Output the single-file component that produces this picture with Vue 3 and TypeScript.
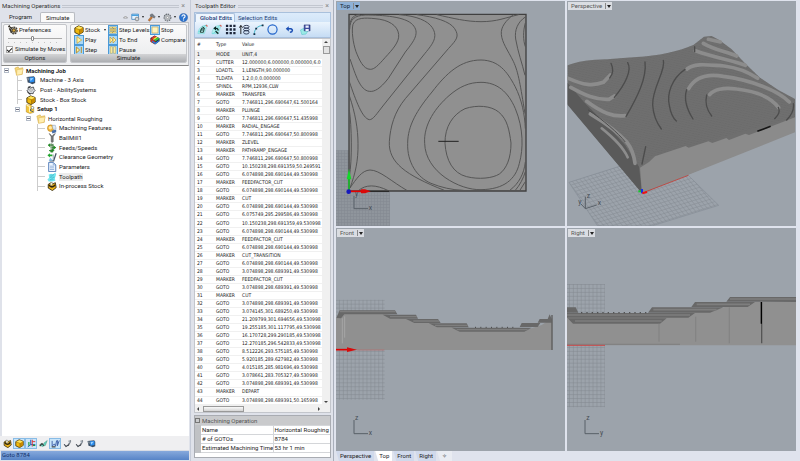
<script setup lang="ts">
import { ref } from 'vue'

interface TreeNode {
  label: string
  icon: string
  depth: number
  open?: boolean
  strong?: boolean
  selected?: boolean
}

const tree: TreeNode[] = [
  { label: 'Machining Job', icon: 'folder', depth: 0, open: true, strong: true },
  { label: 'Machine - 3 Axis', icon: 'machine', depth: 1 },
  { label: 'Post - AbilitySystems', icon: 'post', depth: 1 },
  { label: 'Stock - Box Stock', icon: 'box', depth: 1 },
  { label: 'Setup 1', icon: 'setup', depth: 1, open: true, strong: true },
  { label: 'Horizontal Roughing', icon: 'folder', depth: 2, open: true },
  { label: 'Machining Features', icon: 'features', depth: 3 },
  { label: 'BallMill1', icon: 'mill', depth: 3 },
  { label: 'Feeds/Speeds', icon: 'feeds', depth: 3 },
  { label: 'Clearance Geometry', icon: 'clearance', depth: 3 },
  { label: 'Parameters', icon: 'page', depth: 3 },
  { label: 'Toolpath', icon: 'path', depth: 3, selected: true },
  { label: 'In-process Stock', icon: 'instock', depth: 3 },
]

const source = `MODE UNIT,4
CUTTER 12.000000,6.000000,0.000000,6.0
LOADTL 1,LENGTH,90.000000
TLDATA 1,2,0,0,0.000000
SPINDL RPM,12936,CLW
MARKER TRANSFER
GOTO 7.746811,296.690647,61.500164
MARKER PLUNGE
GOTO 7.746811,296.690647,51.435998
MARKER RADIAL_ENGAGE
GOTO 7.746811,296.690647,50.800998
MARKER ZLEVEL
MARKER PATHRAMP_ENGAGE
GOTO 7.746811,296.690647,50.800998
GOTO 10.150238,298.691359,50.249591
GOTO 6.074898,298.690144,49.530998
MARKER FEEDFACTOR_CUT
GOTO 6.074898,298.690144,49.530998
MARKER CUT
GOTO 6.074898,298.690144,49.530998
GOTO 6.075749,295.299586,49.530998
GOTO 10.150238,298.691359,49.530998
GOTO 6.074898,298.690144,49.530998
MARKER FEEDFACTOR_CUT
GOTO 6.074898,298.690144,49.530998
MARKER CUT_TRANSITION
GOTO 6.074898,298.690144,49.530998
GOTO 3.074898,298.689391,49.530998
MARKER FEEDFACTOR_CUT
GOTO 3.074898,298.689391,49.530998
MARKER CUT
GOTO 3.074898,298.689391,49.530998
GOTO 3.074145,301.689250,49.530998
GOTO 21.209799,301.694656,49.530998
GOTO 19.255185,301.117795,49.530998
GOTO 16.170728,299.290185,49.530998
GOTO 12.270185,296.542833,49.530998
GOTO 8.512226,293.575185,49.530998
GOTO 5.920185,289.627982,49.530998
GOTO 4.015185,285.981696,49.530998
GOTO 3.078661,283.705327,49.530998
GOTO 3.074898,298.689391,49.530998
MARKER DEPART
GOTO 3.074898,298.689391,50.165998`

const commands = source.split('\n').map((line) => {
  const cut = line.indexOf(' ')
  return { type: line.slice(0, cut), value: line.slice(cut + 1) }
})

const simulateColumns = [
  [
    { label: 'Stock', icon: 'box', menu: true },
    { label: 'Play', icon: 'play' },
    { label: 'Step', icon: 'step' },
  ],
  [
    { label: 'Step Levels', icon: 'levels' },
    { label: 'To End', icon: 'toend' },
    { label: 'Pause', icon: 'pause' },
  ],
  [
    { label: 'Stop', icon: 'stop' },
    { label: 'Compare', icon: 'compare' },
  ],
]

const editTools = ['regen', 'swap', 'dots', 'levelsort', 'arc', 'circle', 'undo', 'save']
const viewTools = [
  { icon: 'instock', on: false },
  { icon: 'box', on: true },
  { icon: 'axes', on: true },
  { icon: 'toolpath2', on: false },
  { icon: 'toolw', on: true },
  { icon: 'tool', on: false },
  { icon: 'tool', on: false },
  { icon: 'machine', on: false },
]

const details = [
  ['Name', 'Horizontal Roughing'],
  ['# of GOTOs', '8784'],
  ['Estimated Machining Time', '53 hr 1 min'],
]

const viewTabs = ['Perspective', 'Top', 'Front', 'Right']
const activeView = ref('Top')
const byMoves = ref(true)
const speed = ref(45)
</script>

<template>
  <svg class="defs" aria-hidden="true">
    <symbol id="folder" viewBox="0 0 24 24">
      <path d="M2 5l8-3 2 4 9-2-1 16-14 2z" fill="#f5d777" stroke="#c79a32" />
      <path d="M7 9l15-2-3 13-13 2z" fill="#ffeeb0" stroke="#d9ae4c" />
    </symbol>
    <symbol id="machine" viewBox="0 0 24 24">
      <path d="M2 5l17-2 3 4v12l-7 3-6-3-5-1z" fill="#3b4f66" />
      <path d="M8 6l12-1v11l-11 2z" fill="#2a8df0" />
      <path d="M1 5l7 2-1 6-5-3z" fill="#7b8793" />
      <path d="M10 8l8-1-7 8z" fill="#9bd2ff" />
    </symbol>
    <symbol id="post" viewBox="0 0 24 24">
      <path d="M5 6l5-3 3 3 5-1 1 5 3 3-4 4-1 4-5-1-4 2-2-5-4-3 3-3z" fill="#d9dde2" stroke="#3c4046" stroke-width="2" />
      <circle cx="12" cy="12" r="3" fill="#fff" stroke="#444" />
      <path d="M3 17l8 5M5 5l6 2" stroke="#222" stroke-width="2" />
    </symbol>
    <symbol id="box" viewBox="0 0 24 24">
      <path d="M2 7l9-5 11 4v11l-10 6-10-5z" fill="#f2b90c" stroke="#3b2d05" stroke-width="2" />
      <path d="M3 7l9-4 9 3-8 5z" fill="#ffe45c" />
      <path d="M13 11l8-4v10l-8 5z" fill="#c88a02" />
      <path d="M3 8l10 3v11" fill="none" stroke="#6b4d05" />
    </symbol>
    <symbol id="setup" viewBox="0 0 24 24">
      <path d="M3 2h9l9 6v12l-9 3-9-4z" fill="#f5c63a" stroke="#9b7415" />
      <path d="M4 3l7 3v14" fill="none" stroke="#fff3b8" stroke-width="3" />
      <path d="M12 14l8-6M12 15l8 4" stroke="#36537a" stroke-width="2" />
      <circle cx="18" cy="9" r="3" fill="#fff" stroke="#405a7a" />
    </symbol>
    <symbol id="features" viewBox="0 0 24 24">
      <circle cx="9" cy="10" r="8" fill="#f3b437" stroke="#a46f14" />
      <circle cx="8" cy="9" r="4" fill="#ffe9a4" />
      <path d="M12 3h8l2 8-7 3z" fill="#dce9f7" stroke="#7a8ba0" />
      <path d="M11 16l11-3v7l-9 3z" fill="#4a6fa8" />
    </symbol>
    <symbol id="mill" viewBox="0 0 24 24">
      <path d="M5 1l5 8v12l2 2 3-2V9l5-8-5 3-3 4-3-4z" fill="#777" stroke="#444" />
    </symbol>
    <symbol id="feeds" viewBox="0 0 24 24">
      <path d="M10 1v8M10 13v10M14 2v20" stroke="#234a22" stroke-width="2" />
      <path d="M3 5h13M3 5l4-3v7zM21 11H8M21 11l-5-4v8zM5 18h12l-4-4v8z" fill="#2bab2d" stroke="#187a1a" stroke-width="1.5" />
    </symbol>
    <symbol id="clearance" viewBox="0 0 24 24">
      <path d="M1 8l6-5v3h6v4H7v3z" fill="#20a52c" />
      <path d="M6 21h10L22 3" fill="none" stroke="#495466" stroke-width="3" />
      <path d="M8 13l6 8H4z" fill="#84bce8" />
      <path d="M15 6v14" stroke="#8996a5" stroke-width="2" />
    </symbol>
    <symbol id="page" viewBox="0 0 24 24">
      <path d="M4 1h11l6 6v16H4z" fill="#edf5ff" stroke="#3e6db0" stroke-width="2" />
      <path d="M7 10h10M7 14h10M7 18h10M15 1v6h6" fill="none" stroke="#6c92c9" stroke-width="1.5" />
    </symbol>
    <symbol id="path" viewBox="0 0 24 24">
      <path d="M4 6l6-2 4 2 6-5 2 5-3 9 1 6-7 2-9 0-3-5 4-4z" fill="#76e6ee" />
      <path d="M7 8l10-2-10 7 11-1-11 7 9-1" fill="none" stroke="#3bb9cd" stroke-width="1.5" />
    </symbol>
    <symbol id="instock" viewBox="0 0 24 24">
      <path d="M3 8l7-4 4 3 6-3 2 12-9 7-10-6z" fill="#eeb51a" stroke="#2f2506" stroke-width="2" />
      <path d="M5 9c3 7 11 7 14 0" fill="none" stroke="#2d2610" stroke-width="4" />
      <path d="M8 3l6 1-2 7-4-1z" fill="#f8f2cf" stroke="#666" />
    </symbol>
    <symbol id="gear" viewBox="0 0 24 24">
      <circle cx="12" cy="12" r="9" fill="#d5d8dc" stroke="#666b72" stroke-width="3" stroke-dasharray="4 2" />
      <circle cx="12" cy="12" r="7" fill="#c9cdd2" stroke="#70757b" />
      <circle cx="12" cy="12" r="3" fill="#f5f5f5" stroke="#555" />
    </symbol>
    <symbol id="prefs" viewBox="0 0 24 24">
      <circle cx="14" cy="13" r="8" fill="#a9a49a" stroke="#423f39" stroke-width="3" stroke-dasharray="4 2" />
      <circle cx="14" cy="13" r="4" fill="#d9a93a" stroke="#3a3020" stroke-width="2" />
      <path d="M2 2l7 7M3 8l6 10M1 5l3-4" stroke="#37332b" stroke-width="3" />
    </symbol>
    <symbol id="play" viewBox="0 0 24 24">
      <path d="M6 2l14 10-14 10z" fill="#fff3a3" stroke="#c59b2c" stroke-width="2" />
    </symbol>
    <symbol id="step" viewBox="0 0 24 24">
      <path d="M4 3l10 9-10 9zM19 3v18" fill="#fff3a3" stroke="#b99032" stroke-width="3" />
    </symbol>
    <symbol id="levels" viewBox="0 0 24 24">
      <path d="M2 5h20M2 12h20M2 19h20" stroke="#9b7a21" stroke-width="5" />
      <path d="M3 5h18M3 12h18M3 19h18" stroke="#ffe98a" stroke-width="3" />
      <path d="M9 3l6 6M15 15l-6 6" stroke="#a58733" stroke-width="2" />
    </symbol>
    <symbol id="toend" viewBox="0 0 24 24">
      <path d="M3 3l9 9-9 9zM12 3l9 9-9 9z" fill="#fff3a3" stroke="#c29931" stroke-width="2" />
    </symbol>
    <symbol id="pause" viewBox="0 0 24 24">
      <path d="M4 2h6v20H4zM14 2h6v20h-6z" fill="#fff3a3" stroke="#b69646" stroke-width="1.5" />
    </symbol>
    <symbol id="stop" viewBox="0 0 24 24">
      <path d="M3 3h18v18H3z" fill="#fff5bd" stroke="#c6a65b" stroke-width="2" />
    </symbol>
    <symbol id="compare" viewBox="0 0 24 24">
      <path d="M1 7l10-6 12 7v7l-11 8L1 16z" fill="#252b3b" />
      <path d="M3 7l8-5 4 2-9 6z" fill="#e9342a" />
      <path d="M6 10l9-6 4 2-9 6z" fill="#ffe22d" />
      <path d="M9 12l10-6 4 3-10 6z" fill="#36c940" />
      <path d="M2 8l11 7v7L2 16z" fill="#d42c22" />
      <path d="M5 13l8 5 9-6v3l-9 7-8-5z" fill="#287fe0" />
    </symbol>
    <symbol id="window" viewBox="0 0 24 24">
      <path d="M2 3h18v14H2z" fill="#e6f4ff" stroke="#3a7fbd" stroke-width="2" />
      <path d="M2 4h18v4H2z" fill="#4aa2df" />
      <circle cx="16" cy="16" r="5" fill="#d4d7da" stroke="#777" stroke-width="2" />
    </symbol>
    <symbol id="hammer" viewBox="0 0 24 24">
      <path d="M11 9L3 19l4 3 8-10z" fill="#c97935" stroke="#7c4217" />
      <path d="M8 5l6-3 8 8-3 4-5-5-4 1z" fill="#777d85" stroke="#42464b" />
    </symbol>
    <symbol id="help" viewBox="0 0 24 24">
      <circle cx="12" cy="12" r="11" fill="#2d74cf" stroke="#1a4b94" />
      <path d="M8 9c0-6 9-5 8 0 0 3-4 3-4 6M12 17v3" fill="none" stroke="#fff" stroke-width="3" />
    </symbol>
    <symbol id="regen" viewBox="0 0 24 24">
      <path d="M2 21C3 10 9 4 18 3l3 3-5 15z" fill="#b4efed" stroke="#66d3d5" />
      <path d="M3 17c8-1 10-14 18-15" fill="none" stroke="#5fd9df" stroke-width="2" />
      <path d="M7 18l3-9h6l-2 9zM8 13h7M12 6l4 3" fill="none" stroke="#1f3b35" stroke-width="2" />
      <path d="M19 3l3 0v3" fill="none" stroke="#e25040" stroke-width="2" />
    </symbol>
    <symbol id="swap" viewBox="0 0 24 24">
      <path d="M2 21C3 10 9 4 18 3l3 3-5 15z" fill="#b4efed" stroke="#66d3d5" />
      <path d="M3 21c9-1 10-17 18-18" fill="none" stroke="#68d9df" stroke-width="2" />
      <path d="M5 9l6-4v3c4 0 6 2 6 6h-3c0-2-1-3-3-3v3z" fill="#0a2623" />
      <path d="M10 16l6 5" stroke="#102c2a" stroke-width="3" />
      <path d="M19 3h3v3" fill="none" stroke="#e25040" stroke-width="2" />
    </symbol>
    <symbol id="dots" viewBox="0 0 24 24">
      <path d="M2 4h22M2 12h22M2 20h22" stroke="#1b2438" stroke-width="5" stroke-dasharray="5 3" />
    </symbol>
    <symbol id="levelsort" viewBox="0 0 24 24">
      <path d="M4 22V4M1 8l3-5 4 5" fill="none" stroke="#111" stroke-width="2" />
      <ellipse cx="16" cy="6" rx="6" ry="3" fill="none" stroke="#26324d" stroke-width="2" />
      <ellipse cx="16" cy="12" rx="6" ry="3" fill="none" stroke="#26324d" stroke-width="2" />
      <ellipse cx="16" cy="18" rx="6" ry="4" fill="none" stroke="#26324d" stroke-width="2" />
    </symbol>
    <symbol id="arc" viewBox="0 0 24 24">
      <path d="M3 23C2 12 10 4 21 3" fill="none" stroke="#37b3c6" stroke-width="2" />
      <path d="M1 20h4v4H1zM5 8h4v4H5zM19 1h4v4h-4z" fill="#152f45" />
    </symbol>
    <symbol id="circle" viewBox="0 0 24 24">
      <circle cx="12" cy="12" r="10" fill="none" stroke="#1f62c9" stroke-width="2.5" />
    </symbol>
    <symbol id="undo" viewBox="0 0 24 24">
      <path d="M6 10h9c7 1 6 9-2 9" fill="none" stroke="#1c4fb4" stroke-width="4" />
      <path d="M2 10l8-7v14z" fill="#1c4fb4" />
    </symbol>
    <symbol id="save" viewBox="0 0 24 24">
      <path d="M1 13l8-4 9 5-5 8-9 1z" fill="#9be9e6" stroke="#43bdc0" />
      <path d="M9 2h13v13H9z" fill="#3d4a9c" stroke="#1f2a6a" />
      <path d="M12 3h7v5h-7zM12 11h7v4h-7z" fill="#eef1ff" />
    </symbol>
    <symbol id="axes" viewBox="0 0 24 24">
      <path d="M10 2v13l-8 6M10 15h12" fill="none" stroke="#1552b5" stroke-width="2.5" />
      <path d="M14 2v18M14 7h8" stroke="#d33" stroke-width="2.5" />
      <path d="M5 8v10M16 17h6" stroke="#1c9c33" stroke-width="3" />
    </symbol>
    <symbol id="toolpath2" viewBox="0 0 24 24">
      <path d="M2 16c4-9 8 3 12-6l8-6-5 13-8 3z" fill="#65d3bd" stroke="#2c7b65" />
      <path d="M2 19l6-7 5 6" fill="none" stroke="#333" stroke-width="3" />
    </symbol>
    <symbol id="toolw" viewBox="0 0 24 24">
      <path d="M3 5v14l6-6 3 6 3-15M17 3v15l5-14" fill="none" stroke="#3d5ea8" stroke-width="2.5" />
      <path d="M2 21h10" stroke="#333" stroke-width="3" />
    </symbol>
    <symbol id="tool" viewBox="0 0 24 24">
      <path d="M3 14l5 6 6-4M14 18l6-14" fill="none" stroke="#3d444d" stroke-width="3" />
      <path d="M14 5h7l-3 8" fill="#abb4bf" stroke="#676e78" />
    </symbol>
    <pattern id="gridFine" width="11.8" height="11.8" patternUnits="userSpaceOnUse">
      <path d="M0 0H12M0 0V12" fill="none" stroke="#82888f" stroke-width="3" />
    </pattern>
    <pattern id="gridTop" width="9" height="9" patternUnits="userSpaceOnUse">
      <path d="M0 0H9M0 0V9" fill="none" stroke="#82888f" stroke-width="3" />
    </pattern>
    <pattern id="gridTilt" width="12" height="12" patternUnits="userSpaceOnUse" patternTransform="matrix(.94 -.29 .62 .76 0 0)">
      <path d="M0 0H12M0 0V12" fill="none" stroke="#848a91" stroke-width="3" />
    </pattern>
    <pattern id="weave" width="9" height="7" patternUnits="userSpaceOnUse" patternTransform="rotate(12)">
      <path d="M0 3l5 2 4-2" fill="none" stroke="#636363" stroke-width="1" />
    </pattern>
  </svg>

  <div class="app">
    <aside class="operations">
      <header class="title"><h2>Machining Operations</h2><i></i><button aria-label="Close operations">×</button></header>
      <nav class="tabs">
        <button>Program</button>
        <button class="active">Simulate</button>
        <div class="quick">
          <button aria-label="Collapse"><svg class="caret" viewBox="0 0 10 8"><path d="M1 6l4-4 4 4z" fill="#fff" stroke="#555" /></svg></button>
          <button class="drop" aria-label="Windows"><svg class="ico"><use href="#window" /></svg></button>
          <button class="drop" aria-label="Tools"><svg class="ico"><use href="#hammer" /></svg></button>
          <button class="drop" aria-label="Settings"><svg class="ico"><use href="#gear" /></svg></button>
          <button aria-label="Help"><svg class="ico"><use href="#help" /></svg></button>
        </div>
      </nav>
      <div class="ribbon">
        <section class="group options">
          <div class="body">
            <button class="cmd"><svg class="ico big"><use href="#prefs" /></svg>Preferences</button>
            <input v-model="speed" class="slider" type="range" aria-label="Simulation speed" />
            <div class="ticks"></div>
            <label class="check"><input v-model="byMoves" type="checkbox" />Simulate by Moves</label>
          </div>
          <h3>Options</h3>
        </section>
        <section class="group simulate">
          <div class="body cols">
            <div v-for="(col, c) in simulateColumns" :key="c" class="col">
              <button v-for="b in col" :key="b.label" class="cmd">
                <svg class="ico big" :class="{ tile: b.icon !== 'box' && b.icon !== 'compare' }"><use :href="'#' + b.icon" /></svg>{{ b.label }}<span v-if="'menu' in b" class="arrow"></span>
              </button>
            </div>
          </div>
          <h3>Simulate</h3>
        </section>
      </div>
      <div class="tree-pane">
        <ul class="tree">
          <li v-for="n in tree" :key="n.label" :class="['d' + n.depth, { strong: n.strong, selected: n.selected }]">
            <button v-if="n.open" class="toggle" :aria-label="'Collapse ' + n.label"></button>
            <span v-else class="stub"></span>
            <svg class="ico big"><use :href="'#' + n.icon" /></svg>
            <span class="label">{{ n.label }}</span>
          </li>
        </ul>
      </div>
      <div class="view-tools">
        <button v-for="(t, i) in viewTools" :key="i" :class="{ on: t.on }" :aria-label="'Display option ' + (i + 1)">
          <svg class="ico"><use :href="'#' + t.icon" /></svg>
        </button>
      </div>
      <footer class="status">Goto 8784</footer>
    </aside>

    <section class="editor">
      <header class="title"><h2>Toolpath Editor</h2><i></i><button aria-label="Close editor">×</button></header>
      <div class="edit-ribbon">
        <nav><button class="active">Global Edits</button><button>Selection Edits</button></nav>
        <div class="edit-tools">
          <button v-for="t in editTools" :key="t" :aria-label="t"><svg class="ico"><use :href="'#' + t" /></svg></button>
        </div>
      </div>
      <div class="listing">
        <div class="scroll-area">
          <table>
            <thead><tr><th>#</th><th>Type</th><th>Value</th></tr></thead>
            <tbody>
              <tr v-for="(c, i) in commands" :key="i"><td>{{ i + 1 }}</td><td>{{ c.type }}</td><td>{{ c.value }}</td></tr>
            </tbody>
          </table>
        </div>
        <div class="vbar"><span class="up"></span><b></b><i></i><span class="down"></span></div>
        <div class="hbar"><span class="lt"></span><b></b><i></i><span class="rt"></span></div>
      </div>
      <div class="details">
        <h3><span></span>Machining Operation</h3>
        <table>
          <tbody><tr v-for="d in details" :key="d[0]"><th>{{ d[0] }}</th><td>{{ d[1] }}</td></tr></tbody>
        </table>
      </div>
    </section>

    <main class="views">
      <div class="quad">
        <section class="view">
          <svg viewBox="3 3 687 675" preserveAspectRatio="xMinYMin slice">
            <path d="M3 451H165V678H3z" fill="#8f959c" />
            <path d="M3 451H165V678H3z" fill="url(#gridTop)" />
            <path d="M42 43H573V573H42z" fill="#909090" stroke="#404040" stroke-width="4" />
            <g fill="none" stroke="#565656" stroke-width="3">
              <path d="M54 73C62 52 90 53 120 56C160 59 188 76 191 103C194 126 171 150 151 172C129 197 118 208 106 208C85 208 73 180 63 155C54 129 49 92 54 73z" />
              <path d="M44 88C45 57 58 47 91 45C144 45 211 50 233 74C255 98 239 121 211 156L160 235C135 267 118 276 103 274C75 271 62 225 45 177" />
              <path d="M44 75C48 52 58 44 75 44M192 44C245 48 278 62 292 83C309 110 295 130 270 160L146 315C126 340 114 360 103 359C82 355 63 303 43 245" />
              <path d="M245 44C300 51 345 64 359 86C374 109 365 119 341 145L211 296C178 336 166 380 163 425C160 487 211 525 328 571" />
              <path d="M305 44C355 55 393 65 438 65C487 65 511 53 551 44" />
              <path d="M535 44C513 62 497 80 499 103C501 128 518 150 535 184C551 218 556 257 570 341" />
              <path d="M571 51C548 66 538 91 542 117C549 158 561 188 570 226" />
              <path d="M571 69C564 93 564 120 571 140" />
              <path d="M218 430C218 377 246 330 291 276C334 220 376 180 438 180C491 181 516 214 540 259C561 300 569 343 571 386M218 430C216 487 246 532 288 550C318 562 350 570 386 571" />
              <path d="M269 430C265 373 303 321 342 287C374 259 404 247 438 247C486 247 519 275 541 326C566 386 565 448 553 490C542 538 507 568 438 569C374 571 271 516 269 430z" />
              <path d="M330 430C329 380 354 343 390 326C426 314 468 317 491 336C518 358 523 393 528 429C528 474 515 506 493 522C473 535 431 539 395 530C354 520 333 481 330 430z" />
              <path d="M43 287C61 340 69 388 69 430C70 483 61 520 45 564M43 330C50 378 52 478 43 530M44 565C64 537 80 511 105 510C134 510 170 545 217 572M70 572C92 553 122 553 160 572M571 486C567 520 553 550 523 572M571 515C565 535 555 555 540 572M571 545L554 572" />
            </g>
            <path d="M310 424H371M70 574H162" stroke="#222" stroke-width="3" />
            <path d="M42 574V525" stroke="#0bd321" stroke-width="4" />
            <path d="M35 538L42 506L49 538z" fill="#13d82a" />
            <path d="M42 574H85" stroke="#e60000" stroke-width="5" />
            <path d="M78 568H90L107 574L90 580H78z" fill="#db0808" />
            <circle cx="41" cy="575" r="7" fill="#1619bd" />
            <path d="M57 588V626H99" fill="none" stroke="#596068" stroke-width="3" />
            <text x="60" y="588">y</text><text x="101" y="630">x</text>
          </svg>
          <button class="tag current">Top<span></span></button>
        </section>

        <section class="view">
          <svg viewBox="6 3 687 675" preserveAspectRatio="xMinYMin slice">
            <path d="M12 547L198 488L370 526L461 616L260 678H98z" fill="url(#gridTilt)" stroke="#858c95" stroke-width="2" />
            <path d="M8 196C50 178 96 180 145 176L215 171C280 168 340 154 385 135L417 110L440 108L464 121L500 148L540 190L585 233L640 270L690 297V392L231 580L8 312z" fill="#6f6f6f" />
            <path d="M8 196C50 178 96 180 145 176L215 171C280 168 340 154 385 135L417 110L440 108L464 121L500 148L540 190L585 233L640 270L690 297V352L260 470L222 500L8 252z" fill="url(#weave)" />
            <path d="M8 249L60 310L125 374L180 435L222 500L231 580L8 315z" fill="#5a5a5a" />
            <path d="M225 503L252 486L270 469L362 438L371 443L430 424L442 429L484 414L492 420L541 401L552 405L690 352V397L231 580z" fill="#8b8b8b" />
            <g fill="none" stroke="#8c8c8c" stroke-width="11" stroke-linecap="round">
              <path d="M10 235C55 255 84 259 115 247L136 225" />
              <path d="M17 262C62 286 90 300 132 298L148 288" />
              <path d="M65 304C113 340 145 351 180 347" />
              <path d="M76 342C133 376 162 400 186 427C202 447 207 468 210 490" />
              <path d="M110 385C147 415 174 440 188 472" stroke-width="8" />
              <path d="M430 118L466 126M415 130C450 151 485 154 515 168" />
              <path d="M391 152C451 173 501 181 541 196" />
              <path d="M366 207C390 188 427 195 477 198C510 202 545 213 578 235" />
              <path d="M371 266C390 232 422 220 475 229C553 239 638 270 673 306" />
              <path d="M434 284C445 269 475 261 515 267C575 274 620 294 641 323" />
            </g>
            <g fill="none" stroke="#4c4c4c" stroke-width="4" stroke-linecap="round">
              <path d="M138 190C147 209 145 222 134 234" />
              <path d="M188 188C202 210 180 254 148 292M240 186C246 235 216 293 183 350" />
              <path d="M295 181C304 209 260 266 263 315C265 348 274 367 289 387" />
              <path d="M360 208C320 236 305 281 313 316C317 341 324 354 334 363" />
              <path d="M365 269C355 300 370 335 384 357M425 285C419 310 429 334 440 348" />
              <path d="M640 322C647 338 637 347 629 356M685 311C688 330 680 345 665 360M389 140V155M242 440L231 492" />
              <path d="M70 330C115 360 160 400 180 425" stroke-width="3" />
            </g>
            <path d="M577 394L617 379" stroke="#161616" stroke-width="5" />
            <path d="M240 576L370 526" stroke="#c33d36" stroke-width="2.5" />
            <path d="M231 580V567" stroke="#1631e8" stroke-width="6" /><path d="M220 574h8" stroke="#13c82b" stroke-width="6" /><path d="M232 580L246 576" stroke="#ed1313" stroke-width="6" />
            <path d="M61 626V590M61 626L95 615M61 626L48 612" fill="none" stroke="#596068" stroke-width="3" />
            <text x="65" y="593">z</text><text x="98" y="616">x</text><text x="40" y="612">y</text>
          </svg>
          <button class="tag">Perspective<span></span></button>
        </section>

        <section class="view">
          <svg viewBox="3 9 687 669" preserveAspectRatio="xMinYMin slice">
            <path d="M3 224H149V524H3z" fill="url(#gridFine)" />
            <path d="M3 280L30 266H150L215 280L285 292L355 307L390 316H570L620 300L652 280V375H3z" fill="#909090" />
            <path d="M4 279L14 256H180L187 268H28L18 280zM143 269H243L249 281H165zM213 282H309L317 294H238zM281 295H395L401 307H306zM350 308H590L568 320H374zM554 306L560 294H616L608 306zM608 293L614 282H638L644 268L650 282V293z" fill="#686868" />
            <path d="M14 260H182M165 275H246M235 288H312M300 301H398M365 314H578" stroke="#7e7e7e" stroke-width="4" />
            <path d="M420 307H535" stroke="#444" stroke-width="3" stroke-dasharray="3 13" />
            <path d="M651 270V375" stroke="#5c5c5c" stroke-width="4" />
            <path d="M22 280V355M29 274V338" stroke="#a5a5a5" stroke-width="3" />
            <path d="M65 375H148" stroke="#bd6b6b" stroke-width="2" />
            <path d="M3 374H40" stroke="#e00000" stroke-width="5" /><path d="M36 367L66 374L36 381z" fill="#d70b0b" />
            <path d="M57 585V626H99" fill="none" stroke="#596068" stroke-width="3" />
            <text x="60" y="586">z</text><text x="101" y="630">x</text>
          </svg>
          <button class="tag">Front<span></span></button>
        </section>

        <section class="view">
          <svg viewBox="6 9 687 669" preserveAspectRatio="xMinYMin slice">
            <path d="M6 177H120V547H6z" fill="url(#gridFine)" />
            <path d="M6 264H255L360 262L480 246L555 230H693V361H6z" fill="#909090" />
            <path d="M6 247H32L40 263H6zM249 263L261 247H475L435 263zM379 246L390 231H570L548 246zM484 230L495 216H693V231zM6 264H390L370 278H6zM8 280H305L285 296H24z" fill="#686868" />
            <path d="M6 270H375M30 288H290M265 254H455M395 238H555M495 222H693" stroke="#7e7e7e" stroke-width="5" />
            <path d="M48 263H245" stroke="#444" stroke-width="3" stroke-dasharray="4 12" />
            <path d="M282 294V350M392 275V350M493 247V355" stroke="#7a7a7a" stroke-width="2" />
            <path d="M590 231V355" stroke="#555" stroke-width="4" /><path d="M589 231V296" stroke="#000" stroke-width="4" />
            <path d="M6 358H345" stroke="#777" stroke-width="2" /><path d="M6 361H120" stroke="#c94a4a" stroke-width="3" />
            <path d="M60 585V626H102" fill="none" stroke="#596068" stroke-width="3" />
            <text x="64" y="586">z</text><text x="105" y="630">y</text>
          </svg>
          <button class="tag">Right<span></span></button>
        </section>
      </div>
      <nav class="view-tabs">
        <button v-for="v in viewTabs" :key="v" :class="{ active: v === activeView }" @click="activeView = v">{{ v }}</button>
        <button aria-label="Add viewport">✧</button>
      </nav>
    </main>
  </div>
</template>

<style>
body { margin: 0; overflow: hidden; }
</style>

<style scoped>
.defs { position: absolute; width: 0; height: 0; }
.app {
  display: grid;
  grid-template-columns: 190px 143px minmax(0, 1fr);
  height: 100vh;
  background: #dfe2ea;
  color: #1c1c1c;
  font: 6px/8px Roboto, "Liberation Sans", sans-serif;
}
* { box-sizing: border-box; }
button { display: flex; align-items: center; margin: 0; padding: 0; border: 0; background: none; color: inherit; font: inherit; white-space: nowrap; }
h2, h3 { margin: 0; font: inherit; white-space: nowrap; }
.ico { width: 9px; height: 9px; flex: none; }
.big { width: 10px; height: 10px; }

.title { display: flex; align-items: center; gap: 2px; height: 12px; padding: 0 4px 0 2px; color: #333; }
.title i { flex: 1; height: 3px; border: solid #c2c6cf; border-width: 1px 0; }
.title button { color: #888; font-size: 7px; }

.operations { display: flex; flex-direction: column; min-width: 0; padding-right: 1px; }
.tabs { display: flex; height: 10px; padding: 0 1px 0 2px; }
.tabs > button { padding: 0 8px 0 7px; }
.tabs > .active { padding: 0 5px; border: 1px solid #b9bcc2; border-bottom: 0; border-radius: 2px 2px 0 0; background: #fafafa; }
.quick { display: flex; align-items: center; justify-content: flex-end; gap: 3px; flex: 1; }
.caret { width: 5px; height: 4px; }
.drop::after { content: ""; margin-left: 2px; border: solid transparent; border-width: 2px 1px 0; border-top-color: #222; }
.ribbon { display: flex; gap: 3px; height: 44px; padding: 1px 1px 2px; margin-left: 1px; border: 1px solid #bfc2c8; border-bottom-color: #888; background: #eff0f2; }
.group { display: flex; flex-direction: column; border: 1px solid #c4c6ca; border-radius: 2px; background: linear-gradient(#fbfbfb, #e9eaec); overflow: hidden; }
.group h3 { height: 8px; background: linear-gradient(#d3d4d6, #acaeb2); text-align: center; }
.options { width: 64px; }
.simulate { flex: 1; }
.body { flex: 1; min-height: 0; padding: 0 4px; }
.cmd { height: 10px; gap: 1px; }
.slider { display: block; width: 54px; height: 6px; margin: 0; appearance: none; background: linear-gradient(#aaa, #aaa) center / 100% 1px no-repeat; }
.slider::-webkit-slider-thumb { width: 3px; height: 5px; appearance: none; border: 1px solid #888; border-radius: 1px; background: #fff; }
.ticks { width: 54px; height: 3px; background: repeating-linear-gradient(90deg, #c4c4c4 0 1px, transparent 1px 6px) center / 100% 1px no-repeat; }
.check { display: flex; align-items: center; gap: 2px; height: 10px; margin-left: -2px; white-space: nowrap; }
.check input { display: grid; place-items: center; flex: none; appearance: none; width: 7px; height: 7px; margin: 0; border: 1px solid #aaa; background: #fff; }
.check input:checked::before { content: ""; width: 2px; height: 4px; border: solid #222; border-width: 0 1px 1px 0; transform: rotate(45deg); }
.cols { display: grid; grid-template-columns: 34px 42px 1fr; padding: 0 2px 0 3px; }
.tile { border: 1px solid #4b9ad8; background: #a9d8f8; }
.arrow { margin-left: 3px; border: solid transparent; border-width: 2px 1px 0; border-top-color: #222; }

.tree-pane { flex: 1; min-height: 0; margin-left: 2px; background: #fff; }
.tree { display: grid; grid-auto-rows: minmax(0, 1fr); height: 125px; margin: 0; padding: 0 0 0 2px; list-style: none; }
.tree li { display: flex; align-items: center; gap: 2px; }
.d1 { padding-left: 11px; }
.tree .d1:not(.strong) { gap: 4px; }
.d2 { padding-left: 22px; }
.d3 { padding-left: 33px; }
.strong { font-weight: 700; }
.toggle { justify-content: center; width: 5px; height: 5px; margin-right: 3px; border: 1px solid #b4bcc8; background: #fff; }
.toggle::after { content: ""; width: 3px; height: 1px; background: #667; }
.stub { align-self: stretch; width: 8px; border-left: 1px solid #ccc; background: linear-gradient(#ccc, #ccc) center / 100% 1px no-repeat; }
.d1 .stub { width: 5px; margin-left: 2px; }
.label { white-space: nowrap; }
.selected .label { background: #ececec; }
.view-tools { display: flex; align-items: center; height: 14px; padding: 0 1px; background: #efeff1; }
.view-tools button { justify-content: center; width: 12px; height: 11px; border: 1px solid transparent; }
.view-tools .on { border-color: #88bce6; background: #c9e5fa; }
.status { height: 10px; margin: 0 0 1px 1px; padding-left: 1px; border-top: 1px solid #d8dce4; background: linear-gradient(#86a9dc, #5784c7); color: #12306a; }

.editor { display: flex; flex-direction: column; min-width: 0; padding: 0 2px 3px 3px; border-left: 1px solid #c5cbd8; }
.editor .title { padding: 0 2px 0 1px; }
.edit-ribbon { height: 26px; border: 1px solid #a9c0dc; background: linear-gradient(#dcebfb, #c0d9f2); }
.edit-ribbon nav { display: flex; height: 9px; color: #1c3d78; }
.edit-ribbon nav button { padding: 0 3px; }
.edit-ribbon nav .active { padding: 0 2px 0 4px; border: 1px solid #a9c0dc; border-bottom: 0; border-radius: 2px 2px 0 0; background: #eef6fe; font-weight: 500; }
.edit-tools { display: flex; gap: 3px; height: 15px; padding: 0 2px; background: linear-gradient(#ebf4fd, #c5dcf4); }
.edit-tools .ico { width: 11px; height: 11px; }
.edit-tools button:nth-child(7) { margin: 0 3px 0 4px; }
.edit-tools button:nth-child(7) .ico { width: 9px; height: 9px; }
.listing { display: grid; grid-template-columns: minmax(0, 1fr) 8px; grid-template-rows: minmax(0, 1fr) 7px; flex: 1; min-height: 0; border: 1px solid #c3c6cc; background: #fff; }
.scroll-area { min-height: 0; overflow: hidden; }
.listing table { width: 100%; height: 100%; table-layout: fixed; border-collapse: collapse; font: 5px/7px "DejaVu Sans Condensed", "Open Sans", sans-serif; }
.listing th, .listing td { padding: 0 0 0 2px; overflow: hidden; border-bottom: 1px solid #f0f0f0; text-align: left; font-weight: 400; white-space: nowrap; }
.listing th { height: 11px; }
.listing th:nth-child(1) { width: 19px; }
.listing th:nth-child(2) { width: 26px; }
.listing tbody tr:first-child { background: #f0f0f0; }
.vbar, .hbar { display: flex; align-items: center; background: #f0f0f0; }
.vbar { flex-direction: column; padding: 2px 0; }
.hbar { grid-column: 1 / -1; padding: 0 10px 0 2px; }
.vbar i, .hbar i { flex: 1; }
.vbar b { width: 7px; height: 8px; margin-top: 3px; border: 1px solid #999; background: #e3e3e3; }
.hbar b { width: 41px; height: 6px; margin-left: 4px; border: 1px solid #999; background: linear-gradient(#fafafa, #d4d4d4); }
.up, .down, .lt, .rt { border: 2px solid transparent; }
.up { border-width: 0 2px 2px; border-bottom-color: #444; }
.down { border-width: 2px 2px 0; border-top-color: #444; }
.lt { border-width: 2px 2px 2px 0; border-right-color: #444; }
.rt { border-width: 2px 0 2px 2px; border-left-color: #444; }
.details { height: 43px; margin-top: 2px; border: 1px solid #a9acb2; background: #fff; }
.details h3 { display: flex; align-items: center; gap: 2px; height: 9px; background: #c9cacc; color: #555; }
.details h3 span { width: 5px; height: 5px; border: 1px solid #777; }
.details table { width: 100%; border-collapse: collapse; table-layout: fixed; border-left: 6px solid #c0c2c5; }
.details th, .details td { height: 9px; padding: 0 0 0 1px; border: 1px solid #d4d6d9; overflow: hidden; text-align: left; font-weight: 400; line-height: 8px; white-space: nowrap; }
.details td { border-right: 0; }
.details th { width: 75px; }

.views { display: flex; flex-direction: column; min-width: 0; padding: 1px 4px 0 2px; border-left: 1px solid #a9afbb; background: #dfe3ed; }
.quad { display: grid; grid-template-columns: 1fr 1fr; grid-template-rows: 225fr 223fr; gap: 2px; flex: 1; min-height: 0; }
.view { position: relative; min-width: 0; min-height: 0; overflow: hidden; background: #9ca3ab; }
.view > svg { display: block; width: 100%; height: 100%; }
.view text { fill: #454c54; font-size: 20px; }
.tag { position: absolute; top: 1px; left: 1px; height: 8px; gap: 3px; padding: 0 1px 0 3px; background: #dadde2; color: #555; }
.tag::after { content: ""; margin-left: -2px; border: solid transparent; border-width: 3px 2px 0; border-top-color: #222; }
.tag span { width: 1px; height: 6px; background: #888; }
.current { background: #8fb1d6; color: #123; }
.view-tabs { display: flex; gap: 1px; height: 10px; }
.view-tabs button { padding: 0 3px 0 4px; background: #d0d9eb; clip-path: polygon(0 0, 100% 0, 100% 100%, 3px 100%); }
.view-tabs .active { background: #fff; }
.view-tabs button:last-child { padding: 0 5px; background: #e9ecf2; }
</style>
